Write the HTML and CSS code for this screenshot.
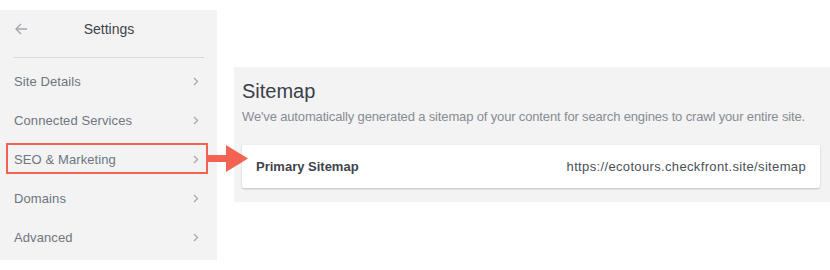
FILE: index.html
```html
<!DOCTYPE html>
<html>
<head>
<meta charset="utf-8">
<link rel="stylesheet" href="styles.css">
</head>
<body>
<div class="page">
  <aside class="sidebar">
    <div class="side-head">
      <svg class="back" width="13" height="12" viewBox="0 0 13 12"><path d="M12 6H1.5M6 1L1 6l5 5" fill="none" stroke="#a3a7ae" stroke-width="1.4"/></svg>
      <span class="side-title">Settings</span>
      <span></span>
    </div>
    <ul class="menu">
      <li class="item"><span>Site Details</span><svg class="chev" width="6" height="9" viewBox="0 0 6 9"><path d="M1 1l3.5 3.5L1 8" fill="none" stroke="#a3a7ae" stroke-width="1.3"/></svg></li>
      <li class="item"><span>Connected Services</span><svg class="chev" width="6" height="9" viewBox="0 0 6 9"><path d="M1 1l3.5 3.5L1 8" fill="none" stroke="#a3a7ae" stroke-width="1.3"/></svg></li>
      <li class="item active"><span>SEO &amp; Marketing</span><svg class="chev" width="6" height="9" viewBox="0 0 6 9"><path d="M1 1l3.5 3.5L1 8" fill="none" stroke="#a3a7ae" stroke-width="1.3"/></svg>
        <div class="highlight"></div>
        <svg class="pointer" width="44" height="28" viewBox="0 0 44 28"><rect x="0" y="10" width="22" height="7" fill="#f26451"/><path d="M20 0L42 13.5L20 27Z" fill="#f26451"/></svg>
      </li>
      <li class="item"><span>Domains</span><svg class="chev" width="6" height="9" viewBox="0 0 6 9"><path d="M1 1l3.5 3.5L1 8" fill="none" stroke="#a3a7ae" stroke-width="1.3"/></svg></li>
      <li class="item"><span>Advanced</span><svg class="chev" width="6" height="9" viewBox="0 0 6 9"><path d="M1 1l3.5 3.5L1 8" fill="none" stroke="#a3a7ae" stroke-width="1.3"/></svg></li>
    </ul>
  </aside>
  <main class="main">
    <section class="panel">
      <h1 class="panel-title">Sitemap</h1>
      <p class="panel-desc">We've automatically generated a sitemap of your content for search engines to crawl your entire site.</p>
      <div class="card">
        <span class="card-label">Primary Sitemap</span>
        <span class="card-url">https://ecotours.checkfront.site/sitemap</span>
      </div>
    </section>
  </main>
</div>
</body>
</html>
```
FILE: styles.css
```css
* { box-sizing: border-box; }
html, body { margin: 0; padding: 0; background: #fff; }
body { font-family: "Liberation Sans", Arial, Helvetica, sans-serif; width: 830px; height: 270px; overflow: hidden; }
.page { display: flex; align-items: flex-start; }

.sidebar {
  width: 217px;
  flex: none;
  height: 250px;
  margin-top: 10px;
  background: #f3f3f3;
  padding: 0 13px 0 14px;
}
.side-head {
  height: 48px;
  padding-bottom: 10px;
  border-bottom: 1px solid #d6d7da;
  display: grid;
  grid-template-columns: 1fr auto 1fr;
  align-items: center;
}
.back { display: block; margin-left: 1px; }
.side-title { font-size: 14px; color: #3e434d; }

.menu { list-style: none; margin: 0; padding: 4px 0 0; }
.item {
  position: relative;
  height: 39px;
  display: flex;
  align-items: center;
  justify-content: space-between;
  font-size: 13px;
  letter-spacing: 0.1px;
  color: #6f7580;
}
.chev { display: block; margin-right: 5px; }
.highlight {
  position: absolute;
  left: -8px;
  right: -4px;
  top: 3px;
  height: 31px;
  border: 2px solid #f26451;
}
.pointer {
  position: absolute;
  left: 192px;
  top: 5px;
}

.main { flex: 1; min-width: 0; padding-left: 17px; margin-top: 67px; }
.panel {
  height: 135px;
  background: #f3f3f3;
  padding: 12px 10px 0 8px;
}
.panel-title {
  margin: 0;
  font-size: 20px;
  line-height: 24px;
  font-weight: normal;
  color: #3a3f49;
}
.panel-desc {
  margin: 6px 0 0;
  font-size: 13px;
  line-height: 16px;
  letter-spacing: -0.15px;
  color: #878c95;
  white-space: nowrap;
}
.card {
  margin-top: 20px;
  height: 43px;
  background: #fff;
  border-radius: 2px;
  box-shadow: 0 1px 2px rgba(0,0,0,0.22);
  display: flex;
  align-items: center;
  justify-content: space-between;
  padding: 0 14px;
  font-size: 13px;
}
.card-label { font-weight: bold; color: #3e434d; }
.card-url { color: #4a4f58; letter-spacing: 0.35px; }
```
